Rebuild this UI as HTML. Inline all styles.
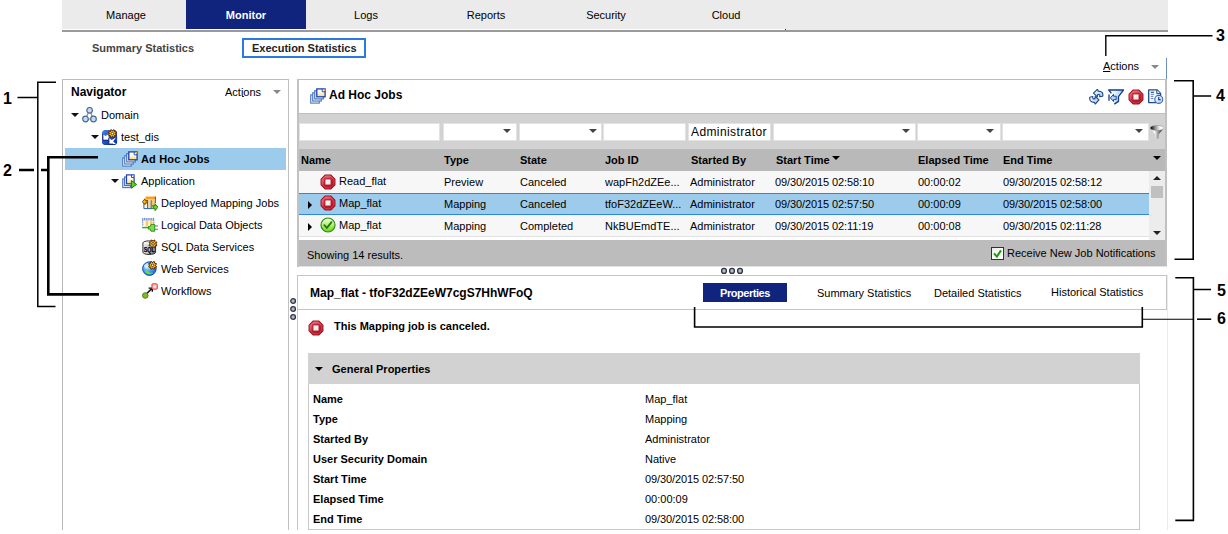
<!DOCTYPE html>
<html><head><meta charset="utf-8">
<style>
*{box-sizing:border-box;margin:0;padding:0}
html,body{width:1228px;height:534px;overflow:hidden;background:#fff}
body{position:relative;font-family:"Liberation Sans",sans-serif;font-size:11px;color:#000}
.a{position:absolute;white-space:nowrap}
.b{font-weight:bold}
.ln{position:absolute;background:#000}
.t{position:absolute;white-space:nowrap;line-height:14px;height:14px}
.tab{position:absolute;top:0;height:29.4px;width:120px;text-align:center;line-height:30px;font-size:11px}
.fi{position:absolute;top:123px;height:18px;background:#fff;border:1px solid #e3e3e3}
.dd{position:absolute;width:0;height:0;border-left:4px solid transparent;border-right:4px solid transparent;border-top:4px solid #111}
.row{position:absolute;left:299px;width:850px;height:22px}
.num{position:absolute;font-weight:bold;font-size:16px;line-height:16px;color:#000}
</style></head><body>
<svg width="0" height="0" style="position:absolute">
<defs>
<linearGradient id="gRed" x1=".2" y1="0" x2=".8" y2="1"><stop offset="0" stop-color="#ea6c78"/><stop offset=".45" stop-color="#d43444"/><stop offset=".55" stop-color="#c41c2c"/><stop offset="1" stop-color="#b01020"/></linearGradient>
<linearGradient id="gGrn" x1="0" y1="0" x2="0" y2="1"><stop offset="0" stop-color="#f4ffe4"/><stop offset=".5" stop-color="#b4f070"/><stop offset="1" stop-color="#66d020"/></linearGradient>
<linearGradient id="gPg" x1="0" y1="0" x2="0" y2="1"><stop offset="0" stop-color="#ffffff"/><stop offset=".35" stop-color="#fffdf4"/><stop offset="1" stop-color="#f8d67c"/></linearGradient>
<linearGradient id="gBlu" x1="0" y1="0" x2="1" y2="1"><stop offset="0" stop-color="#4c84dc"/><stop offset=".5" stop-color="#1c50c4"/><stop offset="1" stop-color="#0a2cb0"/></linearGradient>
<linearGradient id="gCyl" x1="0" y1="0" x2="1" y2="0"><stop offset="0" stop-color="#f4f4f4"/><stop offset=".5" stop-color="#c0c0c0"/><stop offset="1" stop-color="#7a7a7a"/></linearGradient>
<radialGradient id="gGlobe" cx=".35" cy=".35" r=".75"><stop offset="0" stop-color="#e4f4ff"/><stop offset=".45" stop-color="#4aa4fa"/><stop offset="1" stop-color="#1264dc"/></radialGradient>
<linearGradient id="gFun" x1="0" y1="0" x2="1" y2="0"><stop offset="0" stop-color="#d8d8d8"/><stop offset=".3" stop-color="#ffffff"/><stop offset=".55" stop-color="#a0a0a0"/><stop offset=".8" stop-color="#4a4a4a"/><stop offset="1" stop-color="#707070"/></linearGradient>
<linearGradient id="gFunTop" x1="0" y1="0" x2="1" y2="0"><stop offset="0" stop-color="#4a4a4a"/><stop offset=".08" stop-color="#0c0c0c"/><stop offset=".35" stop-color="#8c8c8c"/><stop offset=".7" stop-color="#f4f4f4"/><stop offset="1" stop-color="#ffffff"/></linearGradient>
<linearGradient id="gLB" x1="0" y1="0" x2="0" y2="1"><stop offset="0" stop-color="#f4faff"/><stop offset="1" stop-color="#9cc4f0"/></linearGradient>

<linearGradient id="gLB2" x1="0" y1="0" x2="1" y2=".4"><stop offset="0" stop-color="#ffffff"/><stop offset=".45" stop-color="#e6f1fe"/><stop offset="1" stop-color="#8cbcf2"/></linearGradient>
<linearGradient id="gWh" x1="0" y1="0" x2="1" y2="1"><stop offset="0" stop-color="#ffffff"/><stop offset="1" stop-color="#dedede"/></linearGradient>
<linearGradient id="gDoc" x1="0" y1="0" x2="1" y2="1"><stop offset="0" stop-color="#ffffff"/><stop offset=".6" stop-color="#f0f6fe"/><stop offset="1" stop-color="#a8c8f0"/></linearGradient>
<linearGradient id="gClk" x1="0" y1="0" x2="1" y2="1"><stop offset="0" stop-color="#ffffff"/><stop offset="1" stop-color="#a4c8f4"/></linearGradient>
<radialGradient id="gGear" cx=".5" cy=".5" r=".5"><stop offset="0" stop-color="#fff060"/><stop offset=".55" stop-color="#fcc820"/><stop offset="1" stop-color="#f08c00"/></radialGradient>
<symbol id="iStop" viewBox="0 0 16 16">
<polygon points="14.93,10.87 10.87,14.93 5.13,14.93 1.07,10.87 1.07,5.13 5.13,1.07 10.87,1.07 14.93,5.13" fill="url(#gRed)" stroke="#a01222" stroke-width="1.1"/>
<polygon points="13.82,10.41 10.41,13.82 5.59,13.82 2.18,10.41 2.18,5.59 5.59,2.18 10.41,2.18 13.82,5.59" fill="none" stroke="#f0a0a8" stroke-width=".5" opacity=".6"/>
<rect x="4.9" y="4.9" width="6.2" height="6.2" fill="url(#gWh)" stroke="#a81020" stroke-width="1"/>
</symbol>

<symbol id="iOk" viewBox="0 0 16 16">
<circle cx="8" cy="8" r="7" fill="url(#gGrn)" stroke="#2f8a18" stroke-width="1.2"/>
<path d="M4.3 8.2L6.9 10.9L11.5 5.1" fill="none" stroke="#22760f" stroke-width="1.7" stroke-linecap="round" stroke-linejoin="round"/>
</symbol>

<symbol id="iPages" viewBox="0 0 16 16">
<rect x=".7" y="6.9" width="8.6" height="8.2" fill="#fff8dc" stroke="#4f7cc8" stroke-width="1.15"/>
<rect x="2.7" y="4.8" width="8.6" height="8.2" fill="#fff8dc" stroke="#4a78c6" stroke-width="1.15"/>
<rect x="4.7" y="2.7" width="8.6" height="8.2" fill="#fff8dc" stroke="#4472c4" stroke-width="1.15"/>
<rect x="6.8" y=".9" width="8.3" height="7.9" fill="url(#gPg)" stroke="#1c40b0" stroke-width="1.3"/>
<path d="M12.4 .9L15.1 3.6V.9Z" fill="#f4a020"/>
<path d="M12.2 1V3.8H15" fill="none" stroke="#1c40b0" stroke-width=".9"/>
</symbol>

<symbol id="iApp" viewBox="0 0 16 16">
<rect x=".7" y="5" width="7.8" height="8.6" fill="#fff8dc" stroke="#4f7cc8" stroke-width="1.15"/>
<rect x="2.5" y="3" width="7.8" height="8.6" fill="#fff8dc" stroke="#4472c4" stroke-width="1.15"/>
<rect x="4.5" y=".9" width="7.6" height="8.9" fill="url(#gPg)" stroke="#1c40b0" stroke-width="1.2"/>
<path d="M9.7 .9L12.1 3.3V.9Z" fill="#f4a020"/>
<path d="M9.5 1V3.5H12" fill="none" stroke="#1c40b0" stroke-width=".9"/>
<path d="M9.4 6.6L14.6 10.4L9.4 14.2Z" fill="#5cd028" stroke="#207c10" stroke-width="1" stroke-linejoin="round"/>
</symbol>

<symbol id="iDomain" viewBox="0 0 16 16">
<path d="M7.6 3.2L3.4 12H11.4Z" fill="none" stroke="#c07a28" stroke-width="1.1"/>
<circle cx="7.6" cy="3.3" r="2.8" fill="#c6daf0" stroke="#466a96" stroke-width="1.2"/>
<circle cx="3.5" cy="12" r="2.8" fill="#c6daf0" stroke="#466a96" stroke-width="1.2"/>
<circle cx="11.5" cy="12" r="2.8" fill="#c6daf0" stroke="#466a96" stroke-width="1.2"/>
</symbol>

<symbol id="iDis" viewBox="0 0 16 17">
<path d="M2 1.1H13.2L15.1 3V14.2L13.2 16.1H2L-.1 14.2V3Z" fill="url(#gBlu)"/>
<path d="M.9 5.2L3.6 7L6.6 5V11H.9Z" fill="#fff"/>
<path d="M.9 5V11.2H6.6" fill="none" stroke="#0a1c58" stroke-width=".9"/>
<path d="M6.9 9.1L9.7 10.9L14 8.6L11.2 12.4L14 15H6.9Z" fill="#fff"/>
<path d="M6.9 9V15.1H11" fill="none" stroke="#0a1c58" stroke-width=".9"/>
<path d="M14.32 5.61 L13.89 6.66 L12.72 6.34 L12.14 6.92 L12.46 8.09 L11.41 8.52 L10.81 7.47 L9.99 7.47 L9.39 8.52 L8.34 8.09 L8.66 6.92 L8.08 6.34 L6.91 6.66 L6.48 5.61 L7.53 5.01 L7.53 4.19 L6.48 3.59 L6.91 2.54 L8.08 2.86 L8.66 2.28 L8.34 1.11 L9.39 0.68 L9.99 1.73 L10.81 1.73 L11.41 0.68 L12.46 1.11 L12.14 2.28 L12.72 2.86 L13.89 2.54 L14.32 3.59 L13.27 4.19 L13.27 5.01Z" fill="url(#gGear)" stroke="#5e2c00" stroke-width="1" stroke-linejoin="round"/><circle cx="10.40" cy="4.60" r="1.3" fill="#fff" stroke="#4a2200" stroke-width=".9"/>
</symbol>

<symbol id="iDmj" viewBox="0 0 16 16">
<rect x="1.8" y=".8" width="11.6" height="11.8" fill="#fff4d4"/>
<rect x="3.8" y=".5" width="10" height="3" fill="#f6a020"/>
<rect x="6.2" y="4.2" width="2.6" height="8" fill="#fbd48c"/><rect x="9.6" y="4.2" width="3.4" height="8" fill="#f9c46c"/>
<path d="M1.9 5V12.6H10M13.4 .6V7.2M5.6 4.2V12.4M9.2 4.2V12.4" stroke="#2a5cc4" stroke-width="1" fill="none"/>
<path d="M.3 5.7L3 2.8V4.4H5.6L4.6 5.7L5.6 7H3V8.6Z" fill="#fcc000" stroke="#6a3c00" stroke-width=".9" stroke-linejoin="round"/>
<path d="M16 11.2L13 7.8V9.7H10.4L11.6 11.2L10.4 12.7H13V14.7Z" fill="#5cdc24" stroke="#1a7a10" stroke-width=".9" stroke-linejoin="round"/>
</symbol>

<symbol id="iLdo" viewBox="0 0 16 16">
<rect x=".4" y="2.6" width="11.6" height="6.8" fill="#fff6dc"/>
<rect x="3.8" y="3.2" width="2.4" height="6" fill="#f8cc74"/><rect x="8" y="3.2" width="2.4" height="6" fill="#f8cc74"/>
<path d="M.2 1.9H12.2" stroke="#2a5cc4" stroke-width="1.5" stroke-dasharray="1.1 .7"/>
<path d="M.2 3H12.2" stroke="#9ab8ec" stroke-width=".8"/>
<path d="M.7 3.4V9.4M11.8 3.4V7" stroke="#2a5cc4" stroke-width="1" stroke-dasharray="1 1"/>
<path d="M.1 10.6H7" stroke="#3fa81c" stroke-width="1.5"/>
<path d="M6.4 9.5H8.2L9 7.4H12.7V14.2H9L8.2 12.1H6.4Z" fill="#7ce040" stroke="#258614" stroke-width=".9" stroke-linejoin="round"/>
<path d="M13 9H16M13 12.3H16" stroke="#707070" stroke-width="1.1"/>
</symbol>

<symbol id="iSql" viewBox="0 0 16 16">
<path d="M.9 4V13.2C.9 16.2 13.6 16.2 13.6 13.2V4C13.6 1.2 .9 1.2 .9 4Z" fill="url(#gCyl)" stroke="#2c2c2c" stroke-width="1"/>
<ellipse cx="7.2" cy="4" rx="5.6" ry="1.6" fill="#f6f6f6" opacity=".8"/>
<text x="1.7" y="13.2" font-family="Liberation Sans, sans-serif" font-weight="bold" font-size="6.6" fill="#000" stroke="#000" stroke-width=".25" textLength="11" lengthAdjust="spacingAndGlyphs">SQL</text>
<path d="M14.92 5.91 L14.49 6.96 L13.32 6.64 L12.74 7.22 L13.06 8.39 L12.01 8.82 L11.41 7.77 L10.59 7.77 L9.99 8.82 L8.94 8.39 L9.26 7.22 L8.68 6.64 L7.51 6.96 L7.08 5.91 L8.13 5.31 L8.13 4.49 L7.08 3.89 L7.51 2.84 L8.68 3.16 L9.26 2.58 L8.94 1.41 L9.99 0.98 L10.59 2.03 L11.41 2.03 L12.01 0.98 L13.06 1.41 L12.74 2.58 L13.32 3.16 L14.49 2.84 L14.92 3.89 L13.87 4.49 L13.87 5.31Z" fill="url(#gGear)" stroke="#5e2c00" stroke-width="1" stroke-linejoin="round"/><circle cx="11.00" cy="4.90" r="1.3" fill="#fff" stroke="#4a2200" stroke-width=".9"/>
</symbol>

<symbol id="iWeb" viewBox="0 0 16 16">
<circle cx="7.4" cy="8.6" r="6.8" fill="url(#gGlobe)" stroke="#0c4ab8" stroke-width="1"/>
<path d="M3 10.4C4.6 10 6 11 7.4 12.2C8.8 13 10 12.6 11.4 12.8C10 14.6 6 15 3.6 12.8Z" fill="#6cd838"/>
<path d="M2 6C3 4 5 3 6.4 3.2C5.4 5 4.8 6.4 5.2 8C4 8.4 2.8 7.6 2 6Z" fill="#d8f0ff" opacity=".85"/>
<g transform="translate(0 .3)"><path d="M14.52 6.01 L14.09 7.06 L12.92 6.74 L12.34 7.32 L12.66 8.49 L11.61 8.92 L11.01 7.87 L10.19 7.87 L9.59 8.92 L8.54 8.49 L8.86 7.32 L8.28 6.74 L7.11 7.06 L6.68 6.01 L7.73 5.41 L7.73 4.59 L6.68 3.99 L7.11 2.94 L8.28 3.26 L8.86 2.68 L8.54 1.51 L9.59 1.08 L10.19 2.13 L11.01 2.13 L11.61 1.08 L12.66 1.51 L12.34 2.68 L12.92 3.26 L14.09 2.94 L14.52 3.99 L13.47 4.59 L13.47 5.41Z" fill="url(#gGear)" stroke="#5e2c00" stroke-width="1" stroke-linejoin="round"/><circle cx="10.60" cy="5.00" r="1.3" fill="#fff" stroke="#4a2200" stroke-width=".9"/></g>
</symbol>

<symbol id="iWf" viewBox="0 0 16 16">
<path d="M4.6 10.8L10 5.4" stroke="#111" stroke-width="1.5"/>
<path d="M6.6 5.1H10.3V8.8" fill="none" stroke="#111" stroke-width="1.4"/>
<circle cx="3.3" cy="12.5" r="2.8" fill="#86b828" stroke="#4c8410" stroke-width="1"/>
<rect x="10" y=".9" width="5.2" height="5.2" rx=".5" fill="#fdd8d8" stroke="#e82020" stroke-width="1"/>
</symbol>

<symbol id="iRefresh" viewBox="0 0 16 16">
<path d="M4.5 4.1L8.3 .4L9.3 2.1Q12 2.1 13.1 3.4Q14.2 5 13.7 7.2L10.7 7.8Q11 5.8 10.3 5.5H8.7L8.3 7.8Z" fill="url(#gClk)" stroke="#1f4a8a" stroke-width="1.15" stroke-linejoin="round"/>
<path d="M10 10.9L6.2 15L5.2 13.3Q2.6 13.3 1.5 12Q.4 10.4 .8 8.2L3.8 7.5Q3.6 9.6 4.2 9.9H5.9L6.2 7.5Z" fill="url(#gClk)" stroke="#1f4a8a" stroke-width="1.15" stroke-linejoin="round"/>
</symbol>

<symbol id="iFilter" viewBox="0 0 16 16">
<path d="M.7 1H15.6L10.5 7.6V12.4L6.5 15V7.8Z" fill="url(#gLB2)"/>
<path d="M3.4 4.4L.7 1H15.6L10.5 7.6V12.4L6.3 15.1" fill="none" stroke="#173e84" stroke-width="1.3" stroke-linejoin="round"/>
<path d="M1 5.4V11.7" stroke="#173e9a" stroke-width="1.35"/>
<path d="M2.4 8.9L5.5 5.3V7.2H8.2V10.6H5.5V12.5Z" fill="#b4d6fb" stroke="#1f4a9a" stroke-width="1" stroke-linejoin="round"/>
</symbol>

<symbol id="iDocClk" viewBox="0 0 16 16">
<path d="M.7 .8H9L12.6 4.4V13.6H.7Z" fill="url(#gDoc)" stroke="#1f4a8a" stroke-width="1.3" stroke-linejoin="round"/>
<path d="M8.8 1V4.6H12.4" fill="#dce8f8" stroke="#1f4a8a" stroke-width="1"/>
<path d="M2.8 3.3H5.9" stroke="#1f4a8a" stroke-width="1.2"/>
<path d="M2.8 5.4H5.9M2.8 7.4H5.4M2.8 9.5H5.4" stroke="#5a82c0" stroke-width="1"/>
<circle cx="10.8" cy="10.4" r="4" fill="url(#gClk)" stroke="#3866a8" stroke-width="1.1"/>
<path d="M10.7 8.1V10.7H12.7" fill="none" stroke="#1f4a8a" stroke-width="1.2"/>
</symbol>

<symbol id="iFunnel" viewBox="0 0 14 14">
<path d="M.5 3.4L5.1 9.6V13.2Q6.8 14.4 8.6 13.2V9.6L13.6 3.4Z" fill="url(#gFun)"/>
<ellipse cx="7.05" cy="2.9" rx="6.9" ry="2.5" fill="url(#gFunTop)" stroke="#8a8a8a" stroke-width=".5"/>
</symbol>
</defs></svg>


<!-- top tab bar -->
<div class="a" style="left:62px;top:0;width:1106px;height:30px;background:#ebebeb"></div>
<div class="a" style="left:62px;top:29.3px;width:724px;height:.9px;background:#fff"></div>
<div class="a" style="left:62px;top:30px;width:1106px;height:1.9px;background:#9a9a9a"></div>
<div class="a" style="left:785px;top:29px;width:1px;height:1px;background:#333"></div>
<div class="tab" style="left:66px">Manage</div>
<div class="tab b" style="left:186px;background:#10247e;color:#fff">Monitor</div>
<div class="tab" style="left:306px">Logs</div>
<div class="tab" style="left:426px">Reports</div>
<div class="tab" style="left:546px">Security</div>
<div class="tab" style="left:666px">Cloud</div>

<!-- sub tabs -->
<div class="t b" style="left:92px;top:41px;color:#444">Summary Statistics</div>
<div class="a" style="left:242px;top:38px;width:124px;height:20px;border:2px solid #2a7be0"></div>
<div class="t b" style="left:252px;top:41px;color:#222">Execution Statistics</div>

<!-- top-right actions -->
<div class="t" style="left:1103px;top:59px"><u>A</u>ctions</div>
<div class="dd" style="left:1151px;top:65px;border-top-color:#888"></div>
<div class="a" style="left:1166px;top:58px;width:1px;height:22px;background:#6c8fc0"></div>

<!-- navigator panel -->
<div class="a" style="left:62px;top:78.6px;width:227.4px;height:1.5px;background:#bdbdbd"></div>
<div class="a" style="left:62px;top:79px;width:1px;height:451px;background:#b8b8b8"></div>
<div class="a" style="left:288.2px;top:79px;width:1.2px;height:451px;background:#c0c0c0"></div>
<div class="t b" style="left:71px;top:85px;font-size:12px">Navigator</div>
<div class="t" style="left:225px;top:85px">Actions</div>
<div class="dd" style="left:273px;top:90px;border-top-color:#888"></div>
<div class="a" style="left:242px;top:96px;width:2px;height:1px;background:#222"></div>

<div class="a" style="left:65px;top:148px;width:221px;height:22px;background:#9dcbec"></div>
<div class="dd" style="left:71px;top:113px"></div>
<div class="t" style="left:101px;top:108px">Domain</div>
<div class="dd" style="left:91px;top:135px"></div>
<div class="t" style="left:121px;top:130px">test_dis</div>
<div class="t b" style="left:141px;top:152px;letter-spacing:.15px">Ad Hoc Jobs</div>
<div class="dd" style="left:111px;top:179px"></div>
<div class="t" style="left:141px;top:174px">Application</div>
<div class="t" style="left:161px;top:196px">Deployed Mapping Jobs</div>
<div class="t" style="left:161px;top:218px">Logical Data Objects</div>
<div class="t" style="left:161px;top:240px">SQL Data Services</div>
<div class="t" style="left:161px;top:262px">Web Services</div>
<div class="t" style="left:161px;top:284px">Workflows</div>

<!-- right top panel -->
<div class="a" style="left:297px;top:78.6px;width:870px;height:1.5px;background:#bdbdbd"></div>
<div class="a" style="left:297px;top:79px;width:2px;height:188px;background:#c2c2c2"></div>
<div class="a" style="left:1165px;top:80px;width:2px;height:187px;background:#c0c0c0"></div>
<div class="t b" style="left:329px;top:88px;font-size:12px">Ad Hoc Jobs</div>
<div class="a" style="left:299px;top:113px;width:866px;height:1px;background:#c0c0c0"></div>
<div class="a" style="left:299px;top:114px;width:866px;height:35px;background:#d2d2d2"></div>
<div class="fi" style="left:299px;width:141px"></div>
<div class="fi" style="left:443px;width:74px"></div>
<div class="fi" style="left:519px;width:83px"></div>
<div class="fi" style="left:603px;width:83px"></div>
<div class="fi" style="left:688px;width:83px;font-family:'Liberation Sans',sans-serif;font-size:12px;line-height:16px;padding-left:2px;letter-spacing:.4px">Administrator</div>
<div class="fi" style="left:773px;width:143px"></div>
<div class="fi" style="left:917px;width:84px"></div>
<div class="fi" style="left:1002px;width:147px"></div>
<div class="dd" style="left:503px;top:129px;border-top-color:#444"></div>
<div class="dd" style="left:589px;top:129px;border-top-color:#444"></div>
<div class="dd" style="left:902px;top:129px;border-top-color:#444"></div>
<div class="dd" style="left:986px;top:129px;border-top-color:#444"></div>
<div class="dd" style="left:1135px;top:129px;border-top-color:#444"></div>

<div class="a" style="left:299px;top:149px;width:866px;height:22px;background:#b9b9b9"></div>
<div class="t b" style="left:301px;top:153px">Name</div>
<div class="t b" style="left:444px;top:153px">Type</div>
<div class="t b" style="left:520px;top:153px">State</div>
<div class="t b" style="left:605px;top:153px">Job ID</div>
<div class="t b" style="left:691px;top:153px">Started By</div>
<div class="t b" style="left:776px;top:153px">Start Time</div>
<div class="dd" style="left:832px;top:156px;border-top-color:#000"></div>
<div class="t b" style="left:918px;top:153px">Elapsed Time</div>
<div class="t b" style="left:1003px;top:153px">End Time</div>
<div class="dd" style="left:1153px;top:156px;border-top-color:#000"></div>

<div class="row" style="top:171px;background:#f7f7f7"></div>
<div class="row" style="top:193px;background:#9dcbec;border-top:1px solid #2e86e4;border-bottom:1px solid #2e86e4"></div>
<div class="row" style="top:215px;background:#f7f7f7;border-bottom:1px solid #e2e2e2"></div>
<div class="a" style="left:1149px;top:171px;width:16px;height:69px;background:#ececec"></div>
<div class="a" style="left:1151px;top:186px;width:12px;height:12px;background:#c0c0c0"></div>
<div class="a" style="left:1153px;top:176px;width:0;height:0;border-left:4px solid transparent;border-right:4px solid transparent;border-bottom:4px solid #222"></div>
<div class="a" style="left:1153px;top:231px;width:0;height:0;border-left:4px solid transparent;border-right:4px solid transparent;border-top:4px solid #222"></div>

<div class="t" style="left:339px;top:174px">Read_flat</div>
<div class="t" style="left:444px;top:175px">Preview</div>
<div class="t" style="left:520px;top:175px">Canceled</div>
<div class="t" style="left:605px;top:175px">wapFh2dZEe...</div>
<div class="t" style="left:690px;top:175px">Administrator</div>
<div class="t" style="left:775px;top:175px;letter-spacing:-.1px">09/30/2015 02:58:10</div>
<div class="t" style="left:918px;top:175px">00:00:02</div>
<div class="t" style="left:1003px;top:175px;letter-spacing:-.1px">09/30/2015 02:58:12</div>

<div class="t" style="left:339px;top:196px">Map_flat</div>
<div class="t" style="left:444px;top:197px">Mapping</div>
<div class="t" style="left:520px;top:197px">Canceled</div>
<div class="t" style="left:605px;top:197px">tfoF32dZEeW...</div>
<div class="t" style="left:690px;top:197px">Administrator</div>
<div class="t" style="left:775px;top:197px;letter-spacing:-.1px">09/30/2015 02:57:50</div>
<div class="t" style="left:918px;top:197px">00:00:09</div>
<div class="t" style="left:1003px;top:197px;letter-spacing:-.1px">09/30/2015 02:58:00</div>

<div class="t" style="left:339px;top:218px">Map_flat</div>
<div class="t" style="left:444px;top:219px">Mapping</div>
<div class="t" style="left:520px;top:219px">Completed</div>
<div class="t" style="left:605px;top:219px">NkBUEmdTE...</div>
<div class="t" style="left:690px;top:219px">Administrator</div>
<div class="t" style="left:775px;top:219px;letter-spacing:-.1px">09/30/2015 02:11:19</div>
<div class="t" style="left:918px;top:219px">00:00:08</div>
<div class="t" style="left:1003px;top:219px;letter-spacing:-.1px">09/30/2015 02:11:28</div>

<div class="a" style="left:299px;top:240px;width:866px;height:26px;background:#bcbcbc"></div>
<div class="a" style="left:299px;top:266px;width:868px;height:1px;background:#e2e2e2"></div>
<div class="t" style="left:307px;top:248px">Showing 14 results.</div>
<div class="a" style="left:991px;top:247px;width:13px;height:13px;background:linear-gradient(135deg,#e8e8e8,#fff 60%);border:1px solid #1c2e6c"></div>
<svg class="a" style="left:991px;top:247px" width="13" height="13"><path d="M3 6.4L5.9 9.6L10 3.4" fill="none" stroke="#1e9a12" stroke-width="2.1"/></svg>
<div class="t" style="left:1007px;top:246px">Receive New Job Notifications</div>

<!-- bottom panel -->
<div class="a" style="left:297px;top:275px;width:871px;height:255px;border-left:1px solid #c4c4c4;border-right:1px solid #ececec"></div>
<div class="a" style="left:297px;top:275px;width:870px;height:35px;border:1px solid #c4c4c4"></div>
<div class="t b" style="left:310px;top:286px;font-size:12px">Map_flat - tfoF32dZEeW7cgS7HhWFoQ</div>
<div class="a b" style="left:703px;top:283px;width:84px;height:19px;background:#10247e;color:#fff;text-align:center;line-height:21px;letter-spacing:-.45px">Properties</div>
<div class="t" style="left:817px;top:286px">Summary Statistics</div>
<div class="t" style="left:934px;top:286px">Detailed Statistics</div>
<div class="t" style="left:1051px;top:285px">Historical Statistics</div>

<div class="t b" style="left:334px;top:319px">This Mapping job is canceled.</div>

<div class="a" style="left:308px;top:353px;width:832px;height:177px;border:1px solid #c8c8c8"></div>
<div class="a" style="left:308px;top:353px;width:832px;height:31px;background:#d2d2d2"></div>
<div class="dd" style="left:315px;top:367px;border-top-color:#000"></div>
<div class="t b" style="left:332px;top:362px">General Properties</div>

<div class="t b" style="left:313px;top:392px">Name</div><div class="t" style="left:645px;top:392px">Map_flat</div>
<div class="t b" style="left:313px;top:412px">Type</div><div class="t" style="left:645px;top:412px">Mapping</div>
<div class="t b" style="left:313px;top:432px">Started By</div><div class="t" style="left:645px;top:432px">Administrator</div>
<div class="t b" style="left:313px;top:452px">User Security Domain</div><div class="t" style="left:645px;top:452px">Native</div>
<div class="t b" style="left:313px;top:472px">Start Time</div><div class="t" style="left:645px;top:472px;letter-spacing:-.1px">09/30/2015 02:57:50</div>
<div class="t b" style="left:313px;top:492px">Elapsed Time</div><div class="t" style="left:645px;top:492px">00:00:09</div>
<div class="t b" style="left:313px;top:512px">End Time</div><div class="t" style="left:645px;top:512px;letter-spacing:-.1px">09/30/2015 02:58:00</div>


<!-- icons -->
<svg class="a" style="left:81.5px;top:106.8px" width="16" height="16"><use href="#iDomain"/></svg>
<svg class="a" style="left:102px;top:128.8px;overflow:visible" width="16" height="17"><use href="#iDis"/></svg>
<svg class="a" style="left:122px;top:151px" width="16" height="16"><use href="#iPages"/></svg>
<svg class="a" style="left:121.6px;top:173.6px" width="16" height="16"><use href="#iApp"/></svg>
<svg class="a" style="left:142px;top:195.6px" width="16" height="16"><use href="#iDmj"/></svg>
<svg class="a" style="left:142px;top:217.2px" width="16" height="16"><use href="#iLdo"/></svg>
<svg class="a" style="left:141.6px;top:238.6px" width="16" height="16"><use href="#iSql"/></svg>
<svg class="a" style="left:142px;top:260px" width="16" height="16"><use href="#iWeb"/></svg>
<svg class="a" style="left:141.8px;top:282.6px" width="16" height="16"><use href="#iWf"/></svg>
<svg class="a" style="left:309.6px;top:87.8px" width="16" height="16"><use href="#iPages"/></svg>
<svg class="a" style="left:1089px;top:88.8px" width="16" height="16"><use href="#iRefresh"/></svg>
<svg class="a" style="left:1107.6px;top:88.8px" width="16" height="16"><use href="#iFilter"/></svg>
<svg class="a" style="left:1127.7px;top:88.7px" width="16" height="16"><use href="#iStop"/></svg>
<svg class="a" style="left:1148px;top:89px" width="16" height="16"><use href="#iDocClk"/></svg>
<svg class="a" style="left:1150px;top:124.8px" width="14" height="14"><use href="#iFunnel"/></svg>
<svg class="a" style="left:319.7px;top:173.5px" width="16" height="16"><use href="#iStop"/></svg>
<svg class="a" style="left:319.7px;top:195.4px" width="16" height="16"><use href="#iStop"/></svg>
<svg class="a" style="left:319.5px;top:217.3px" width="16" height="16"><use href="#iOk"/></svg>
<svg class="a" style="left:307.8px;top:319.7px" width="16" height="16"><use href="#iStop"/></svg>
<div class="a" style="left:308px;top:200.5px;width:0;height:0;border-top:4px solid transparent;border-bottom:4px solid transparent;border-left:4.5px solid #000"></div>
<div class="a" style="left:308px;top:222.5px;width:0;height:0;border-top:4px solid transparent;border-bottom:4px solid transparent;border-left:4.5px solid #000"></div>
<svg class="a" style="left:718px;top:266px" width="30" height="10"><g fill="#b2bac4" stroke="#2e3446" stroke-width="1.3"><circle cx="6" cy="4.9" r="2.45"/><circle cx="14" cy="4.9" r="2.45"/><circle cx="22" cy="4.9" r="2.45"/></g></svg>
<svg class="a" style="left:288px;top:294px" width="10" height="30"><g fill="#b2bac4" stroke="#2e3446" stroke-width="1.3"><circle cx="5.1" cy="7" r="2.35"/><circle cx="5.1" cy="15" r="2.35"/><circle cx="5.1" cy="23" r="2.35"/></g></svg>
<!-- callouts -->
<div class="num" style="left:3px;top:90.5px">1</div>
<div class="num" style="left:3px;top:162.5px">2</div>
<div class="num" style="left:1216px;top:28.3px">3</div>
<div class="num" style="left:1216px;top:88px">4</div>
<div class="num" style="left:1217px;top:283px">5</div>
<div class="num" style="left:1217px;top:311.3px">6</div>
<svg class="a" style="left:0;top:0" width="1228" height="534" viewBox="0 0 1228 534" fill="none" stroke="#000" shape-rendering="auto">
<!-- 1 -->
<path stroke-width="1.5" d="M56 82.2H37.8V306.4H55.5M17.5 97.5H37.8"/>
<!-- 2 -->
<path stroke-width="2.6" d="M98 157.2H48.3V294.4H99M19 170H34M41 170H48.3"/>
<!-- 3 -->
<path stroke-width="1.4" d="M1105.8 56V35.8H1212.5"/>
<!-- 4 -->
<path stroke-width="1.6" d="M1174 80.8H1193.2V259.3H1174.5M1193.2 96H1211.2"/>
<!-- 5 -->
<path stroke-width="1.6" d="M1175.3 277.8H1193.4V520.4H1175.3M1193.4 289.5H1211"/>
<!-- 6 -->
<path stroke-width="1.6" d="M694.6 307V327H1142.3V307"/>
<path stroke-width="1.1" d="M1142.3 319.2H1193.4"/>
<path stroke-width="1.5" d="M1197 319.2H1211.2"/>
</svg>
</body></html>
